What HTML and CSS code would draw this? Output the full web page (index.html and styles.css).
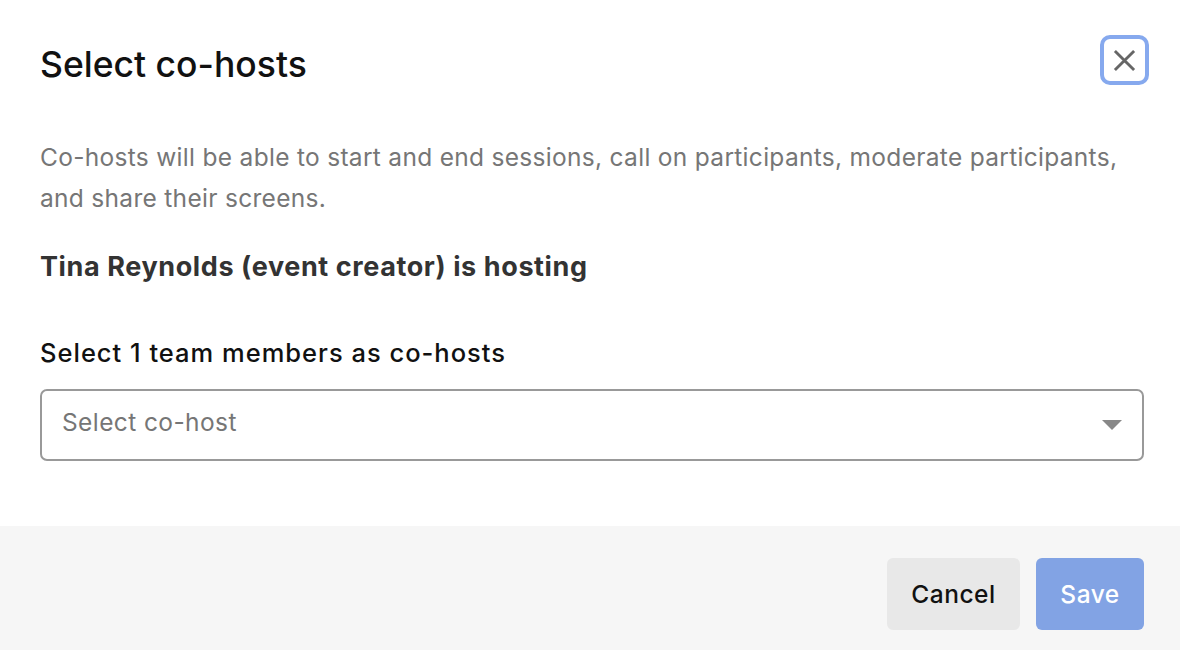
FILE: index.html
```html
<!DOCTYPE html>
<html lang="en">
<head>
<meta charset="utf-8">
<title>Select co-hosts</title>
<link rel="stylesheet" href="styles.css">
</head>
<body>
<div class="modal">
  <div class="content">
    <div class="header">
      <h1 class="title">Select co-hosts</h1>
      <button class="close" aria-label="Close">
        <svg width="24" height="24" viewBox="0 0 24 24"><path d="M2 2 L22 22 M22 2 L2 22" stroke="#666" stroke-width="3" fill="none"/></svg>
      </button>
    </div>
    <p class="desc">Co-hosts will be able to start and end sessions, call on participants, moderate participants, and share their screens.</p>
    <p class="host">Tina Reynolds (event creator) is hosting</p>
    <label class="label">Select 1 team members as co-hosts</label>
    <div class="select">
      <span class="placeholder">Select co-host</span>
      <svg class="caret" width="20" height="10" viewBox="0 0 20 10"><path d="M0 0 H20 L10 10 Z" fill="#888"/></svg>
    </div>
  </div>
  <div class="footer">
    <button class="btn btn-cancel">Cancel</button>
    <button class="btn btn-save">Save</button>
  </div>
</div>
</body>
</html>
```

FILE: styles.css
```css
* { box-sizing: border-box; }
html, body { margin: 0; padding: 0; overflow: hidden; }
body {
  font-family: Inter, "Noto Sans", sans-serif;
  background: #fff;
  color: #111;
}
.modal {
  width: 1180px;
  height: 650px;
  display: flex;
  flex-direction: column;
}
.content {
  flex: 1;
  padding: 35px 36px 0 40px;
  display: flex;
  flex-direction: column;
}
.header {
  display: flex;
  justify-content: space-between;
  align-items: flex-start;
  height: 50px;
}
.title {
  margin: 6px 0 0;
  font-size: 35.5px;
  font-weight: 500;
  line-height: 48px;
  color: #111;
}
.close {
  width: 49px;
  height: 50px;
  margin-right: -5px;
  border: 4px solid #86a9ee;
  border-radius: 10px;
  background: #fff;
  padding: 0;
  display: flex;
  align-items: center;
  justify-content: center;
}
.close svg { width: 23px; height: 23px; }
.desc {
  margin: 52px 0 0;
  font-size: 24.5px;
  letter-spacing: 0.3px;
  line-height: 40.5px;
  color: #767676;
}
.host {
  margin: 29px 0 0;
  font-size: 27px;
  line-height: 40px;
  letter-spacing: 0.6px;
  font-weight: 700;
  color: #333;
}
.label {
  display: block;
  margin-top: 46px;
  font-size: 25.5px;
  letter-spacing: 1px;
  line-height: 40px;
  font-weight: 500;
  color: #111;
}
.select {
  margin-top: 16px;
  height: 72px;
  border: 2px solid #999;
  border-radius: 7px;
  display: flex;
  align-items: center;
  justify-content: space-between;
  padding: 0 20px 6px 20px;
}
.placeholder {
  font-size: 24.5px;
  letter-spacing: 0.4px;
  color: #767676;
}
.caret { margin-top: 6px; }
.footer {
  height: 124px;
  background: #f6f6f6;
  display: flex;
  justify-content: flex-end;
  align-items: flex-start;
  gap: 16px;
  padding: 32px 36px 0 40px;
}
.btn {
  height: 72px;
  padding: 0;
  border: none;
  border-radius: 6px;
  font-family: Inter, "Noto Sans", sans-serif;
  font-size: 24.5px;
  letter-spacing: 0.5px;
  font-weight: 500;
}
.btn-cancel {
  width: 133px;
  background: #e8e8e8;
  color: #111;
}
.btn-save {
  width: 108px;
  background: #82a3e4;
  color: #fff;
}
```
